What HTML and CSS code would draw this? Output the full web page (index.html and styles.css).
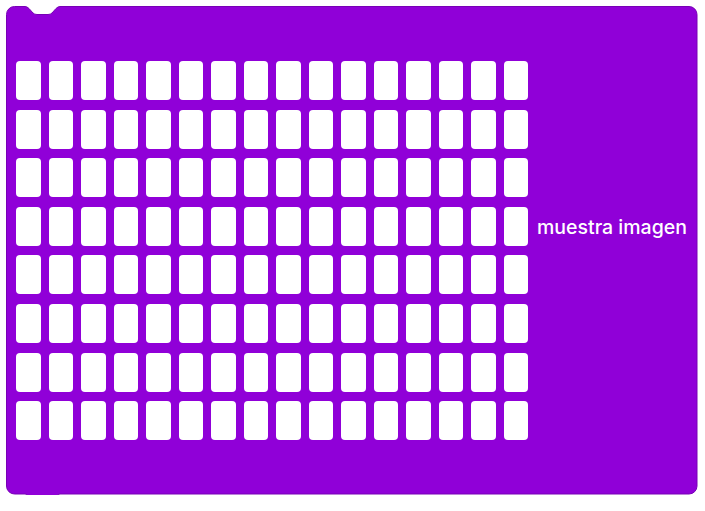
FILE: index.html
```html
<!DOCTYPE html>
<html lang="es">
<head>
  <meta charset="UTF-8">
  <title>muestra imagen</title>
  <link rel="stylesheet" href="styles.css">
</head>
<body>
  <div class="block">
    <!-- block outline with top notch and bottom tab -->
    <svg class="block-shape" width="693" height="500" viewBox="0 0 693 500">
      <path d="M0.5,8.5 A8,8 0 0 1 8.5,0.5 H19 Q21,0.5 23,2.5 L27,7 Q28.5,8.5 31,8.5 H42 Q44.5,8.5 46,7 L50,2.5 Q52,0.5 54,0.5 H683 A8,8 0 0 1 691,8.5 V480 A8,8 0 0 1 683,488 H54 Q52,488 50,490 L46,495 Q44.5,497 42,497 H31 Q28.5,497 27,495 L23,490 Q21,488 19,488 H8.5 A8,8 0 0 1 0.5,480 Z"
        fill="#9000d8" stroke="#7800b6" stroke-width="1"/>
    </svg>
    <div class="block-body">
      <div class="led-grid" id="led-grid"></div>
      <span class="label">muestra imagen</span>
    </div>
  </div>

  <script>
    // 16 x 8 image editor cells
    const grid = document.getElementById("led-grid");
    let cells = "";
    for (let i = 0; i < 16 * 8; i++) {
      cells += '<div class="cell"></div>';
    }
    grid.innerHTML = cells;
  </script>
</body>
</html>
```

FILE: styles.css
```css
body {
  margin: 0;
  background-color: #fff;
  font-family: Inter, "Noto Sans", sans-serif;
}

.block {
  position: relative;
  width: 692px;
  height: 489px;
  margin: 6px 0 0 6px;
}

.block-shape {
  position: absolute;
  top: 0;
  left: 0;
}

.block-body {
  position: relative;
  display: flex;
  align-items: flex-start;
  gap: 9px;
  padding: 55px 0 0 10px;
}

.led-grid {
  display: grid;
  grid-template-columns: repeat(16, 24.5px);
  grid-auto-rows: 39px;
  column-gap: 8px;
  row-gap: 9.6px;
}

.cell {
  background-color: #fff;
  border-radius: 4px;
}

.label {
  margin-top: 154px;
  color: #fff;
  font-size: 19.5px;
  line-height: 24px;
  font-weight: 500;
  white-space: nowrap;
}
```
